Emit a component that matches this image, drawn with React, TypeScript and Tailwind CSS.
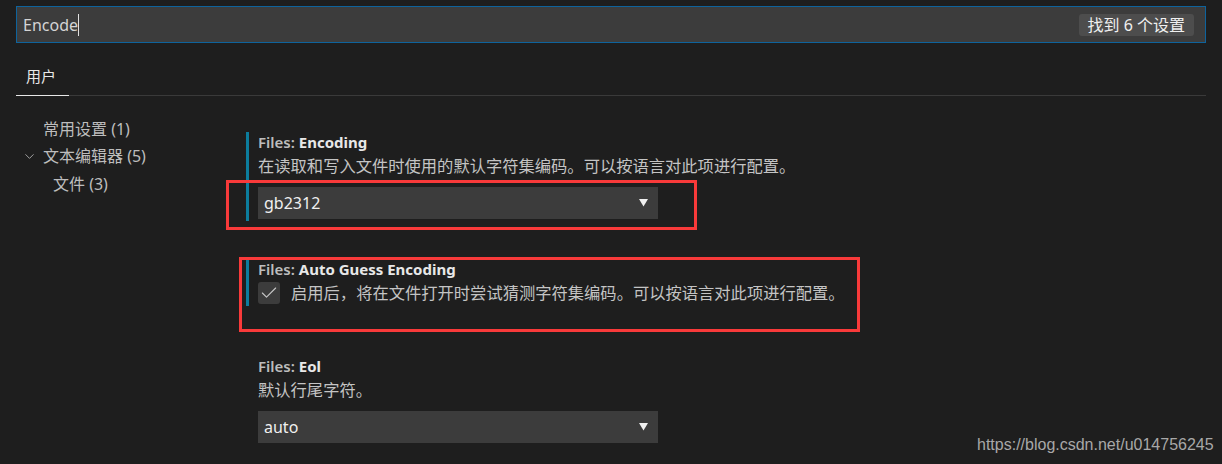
import { ChevronDown, Check } from 'lucide-react';

const FONT = "font-['Segoe_UI','Noto_Sans','Noto_Sans_CJK_SC',sans-serif]";

function Select({ value }: { value: string }) {
  return (
    <div className="flex items-center justify-between w-[400px] h-8 bg-[#3c3c3c] pl-[6px] pr-[10px] text-[16px] text-[#f0f0f0]">
      <span>{value}</span>
      <svg width="9" height="8" viewBox="0 0 9 8" className="mt-[-1px]">
        <path d="M0 0 H9 L4.5 7.5 Z" fill="#f0f0f0" />
      </svg>
    </div>
  );
}

function Title({ name }: { name: string }) {
  return (
    <div className="h-5 leading-5 text-[15px]">
      <span className="font-semibold text-[#bdbdbd]">Files: </span>
      <span className="font-bold text-[#e8e8e8]">{name}</span>
    </div>
  );
}

export default function App() {
  return (
    <div className={`relative w-[1222px] h-[464px] overflow-hidden bg-[#1e1e1e] text-[#cccccc] ${FONT}`}>
      {/* search */}
      <div className="pt-[6px] pl-4 pr-4">
        <div className="flex items-center justify-between h-[37px] w-[1190px] border border-[#0e639c] bg-[#3c3c3c] pl-[6px] pr-[11px]">
          <div className="flex items-center text-[16px] text-[#d4d4d4]">
            Encode<span className="w-px h-[22px] bg-[#e0e0e0]" />
          </div>
          <div className="h-[22px] leading-[22px] px-[9px] rounded-[3px] bg-[#4d4d4d] text-[16px] text-[#f0f0f0]">找到 6 个设置</div>
        </div>
      </div>

      {/* tabs */}
      <div className="mx-4 mt-[20px] w-[1190px] border-b border-[#3a3a3a]">
        <div className="w-[53px] h-[33px] border-b border-[#e7e7e7] -mb-px pl-[10px] pt-[2px] text-[15px] leading-[22px] text-[#e7e7e7]">用户</div>
      </div>

      <div className="flex">
        {/* tree */}
        <div className="w-[246px] pt-[20px] text-[16px] text-[#bdbdbd]">
          <div className="h-[27px] leading-[27px] pl-[43px]">常用设置 (1)</div>
          <div className="h-[27px] leading-[27px] flex items-center pl-[22px]">
            <ChevronDown size={15} strokeWidth={1.3} className="mr-[6px]" />
            文本编辑器 (5)
          </div>
          <div className="h-[28px] leading-[28px] pl-[53px]">文件 (3)</div>
        </div>

        {/* settings */}
        <div className="pt-9 flex flex-col">
          <div className="relative border-l-[3px] border-[#0c7d9d] pl-[9px] pb-[2px]">
            <Title name="Encoding" />
            <div className="h-[26px] leading-[28px] text-[16.3px] text-[#c4c4c4]">在读取和写入文件时使用的默认字符集编码。可以按语言对此项进行配置。</div>
            <div className="mt-[9px]">
              <Select value="gb2312" />
            </div>
            <div className="absolute left-[-23px] top-[48px] w-[471px] h-[50px] border-[3px] border-[#f93a3a]" />
          </div>

          <div className="relative mt-[38px] border-l-[3px] border-[#0c7d9d] pl-[9px] pb-[2px]">
            <Title name="Auto Guess Encoding" />
            <div className="mt-[3px] flex items-center">
              <div className="w-[22px] h-[22px] rounded-[3px] bg-[#3c3c3c] flex items-center justify-center">
                <Check size={20} strokeWidth={1.3} className="text-[#c8c8c8]" />
              </div>
              <span className="ml-[11px] text-[16.3px] text-[#c4c4c4] leading-[22px]">启用后，将在文件打开时尝试猜测字符集编码。可以按语言对此项进行配置。</span>
            </div>
            <div className="absolute left-[-10px] top-[-2px] w-[621px] h-[75px] border-[3px] border-[#f93a3a]" />
          </div>

          <div className="mt-[50px] pl-[12px]">
            <Title name="Eol" />
            <div className="h-[26px] leading-[28px] text-[16.3px] text-[#c4c4c4]">默认行尾字符。</div>
            <div className="mt-[9px]">
              <Select value="auto" />
            </div>
          </div>
        </div>
      </div>

      <div className="absolute left-[977px] top-[433px] text-[16px] text-[#a8a8a8] font-['Liberation_Sans',Arial,sans-serif]">https://blog.csdn.net/u014756245</div>
    </div>
  );
}
